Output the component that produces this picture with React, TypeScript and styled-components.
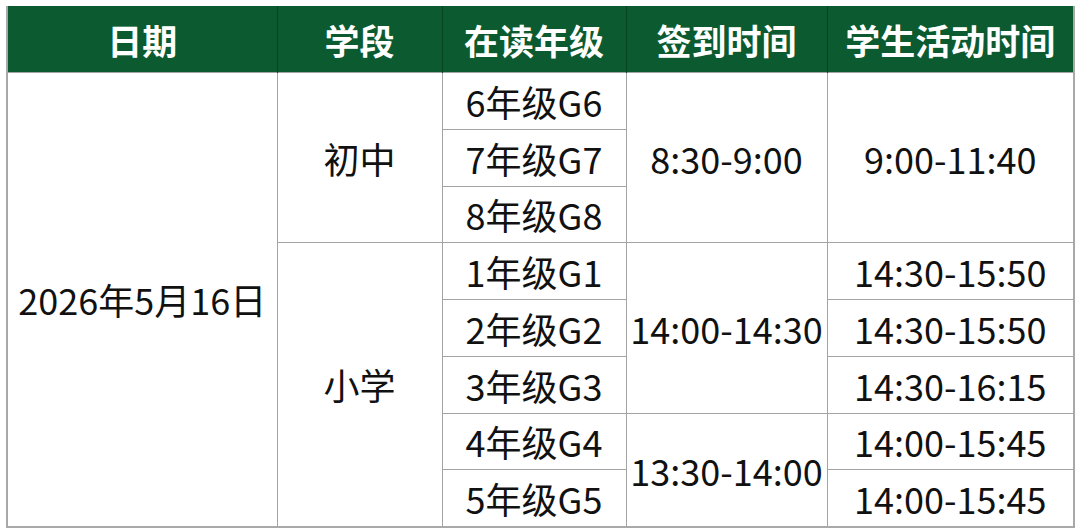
import styled, { createGlobalStyle } from 'styled-components';

const GlobalStyle = createGlobalStyle`
  html, body {
    margin: 0;
    padding: 0;
    background: #ffffff;
  }
  body {
    font-family: "Noto Sans CJK SC", "Noto Sans", sans-serif;
  }
`;

const Page = styled.div`
  padding: 6px 5px 6px 6px;
`;

const Table = styled.table`
  width: 1067px;
  border-collapse: collapse;
  table-layout: fixed;
  border: 2px solid #a9a9a9;
  border-top: none;
`;

const Col = styled.col<{ $w: number }>`
  width: ${p => p.$w}px;
`;

const HeadCell = styled.th`
  height: 66px;
  padding: 0;
  background: #0b5a30;
  color: #ffffff;
  font-size: 35px;
  font-weight: 700;
  text-align: center;
  vertical-align: middle;
  border-left: 1px solid #07431f;
  border-right: 1px solid #07431f;
  line-height: 1;
  white-space: nowrap;
`;

const Cell = styled.td`
  height: 56.75px;
  padding: 0;
  box-sizing: border-box;
  border: 1px solid #a3a3a3;
  color: #111111;
  font-size: 36px;
  font-weight: 400;
  text-align: center;
  vertical-align: middle;
  line-height: 1;
  white-space: nowrap;
`;

const columns = [
  { title: '日期', w: 270 },
  { title: '学段', w: 165 },
  { title: '在读年级', w: 184 },
  { title: '签到时间', w: 201 },
  { title: '学生活动时间', w: 247 },
];

type Row = {
  date?: string;
  stage?: { text: string; span: number };
  grade: string;
  checkin?: { text: string; span: number };
  activity?: { text: string; span: number };
};

const rows: Row[] = [
  {
    date: '2026年5月16日',
    stage: { text: '初中', span: 3 },
    grade: '6年级G6',
    checkin: { text: '8:30-9:00', span: 3 },
    activity: { text: '9:00-11:40', span: 3 },
  },
  { grade: '7年级G7' },
  { grade: '8年级G8' },
  {
    stage: { text: '小学', span: 5 },
    grade: '1年级G1',
    checkin: { text: '14:00-14:30', span: 3 },
    activity: { text: '14:30-15:50', span: 1 },
  },
  { grade: '2年级G2', activity: { text: '14:30-15:50', span: 1 } },
  { grade: '3年级G3', activity: { text: '14:30-16:15', span: 1 } },
  {
    grade: '4年级G4',
    checkin: { text: '13:30-14:00', span: 2 },
    activity: { text: '14:00-15:45', span: 1 },
  },
  { grade: '5年级G5', activity: { text: '14:00-15:45', span: 1 } },
];

export default function App() {
  return (
    <Page>
      <GlobalStyle />
      <Table>
        <colgroup>
          {columns.map(c => (
            <Col key={c.title} $w={c.w} />
          ))}
        </colgroup>
        <thead>
          <tr>
            {columns.map(c => (
              <HeadCell key={c.title}>{c.title}</HeadCell>
            ))}
          </tr>
        </thead>
        <tbody>
          {rows.map(r => (
            <tr key={r.grade}>
              {r.date && <Cell rowSpan={rows.length}>{r.date}</Cell>}
              {r.stage && <Cell rowSpan={r.stage.span}>{r.stage.text}</Cell>}
              <Cell>{r.grade}</Cell>
              {r.checkin && <Cell rowSpan={r.checkin.span}>{r.checkin.text}</Cell>}
              {r.activity && <Cell rowSpan={r.activity.span}>{r.activity.text}</Cell>}
            </tr>
          ))}
        </tbody>
      </Table>
    </Page>
  );
}
